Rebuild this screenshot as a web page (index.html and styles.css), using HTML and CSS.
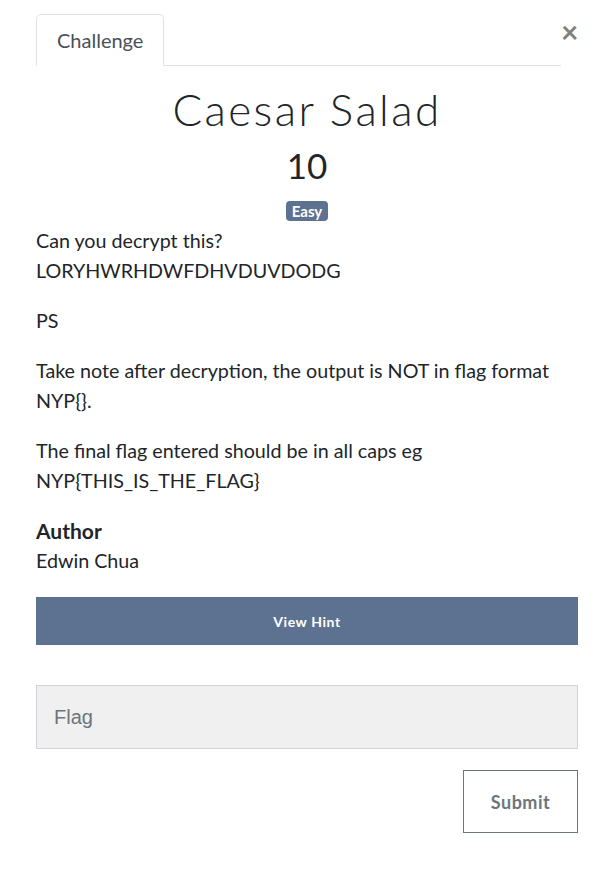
FILE: index.html
```html
<!DOCTYPE html>
<html>
<head>
<meta charset="utf-8">
<link rel="stylesheet" href="styles.css">
</head>
<body>
<div class="modal">
  <div class="header">
    <ul class="tabs">
      <li class="tab active">Challenge</li>
    </ul>
    <button class="close" aria-label="Close">&times;</button>
  </div>
  <h2 class="title">Caesar Salad</h2>
  <h3 class="value">10</h3>
  <div class="tags"><span class="badge">Easy</span></div>
  <div class="description">
    <p>Can you decrypt this?<br>LORYHWRHDWFDHVDUVDODG</p>
    <p>PS</p>
    <p>Take note after decryption, the output is NOT in flag format NYP{}.</p>
    <p>The final flag entered should be in all caps eg NYP{THIS_IS_THE_FLAG}</p>
    <h4 class="author-label">Author</h4>
    <p class="author">Edwin Chua</p>
  </div>
  <button class="hint">View Hint</button>
  <input class="flag" type="text" placeholder="Flag">
  <div class="submit-row">
    <button class="submit">Submit</button>
  </div>
</div>
</body>
</html>
```
FILE: styles.css
```css
* { box-sizing: border-box; }
body {
  margin: 0;
  background: #fff;
  font-family: Lato, "Liberation Sans", sans-serif;
  color: #212529;
  font-size: 19.7px;
  line-height: 30px;
}
.modal {
  padding: 14px 30px 40px 36px;
}
.header {
  display: flex;
  align-items: flex-start;
}
.tabs {
  flex: 1;
  list-style: none;
  margin: 0;
  padding: 0;
  display: flex;
  border-bottom: 1px solid #dee2e6;
  font-size: 20px;
}
.tab {
  padding: 10px 20px;
  border: 1px solid transparent;
  border-radius: 5px 5px 0 0;
  color: #495057;
  margin-bottom: -1px;
}
.tab.active {
  border-color: #dee2e6 #dee2e6 #fff;
  background: #fff;
}
.close {
  background: none;
  border: 0;
  padding: 0;
  margin: 2px 0 0 0;
  width: 17px;
  font-family: Lato, sans-serif;
  font-weight: 700;
  font-size: 30px;
  line-height: 30px;
  color: #808080;
  cursor: pointer;
}
.title {
  text-align: center;
  font-family: Lato, sans-serif;
  font-weight: 300;
  font-size: 44px;
  letter-spacing: 2.4px;
  line-height: 53px;
  margin: 17px 0 0 0;
  color: #212529;
}
.value {
  text-align: center;
  font-weight: 400;
  font-size: 35px;
  line-height: 42px;
  margin: 8px 0 0 0;
}
.tags {
  text-align: center;
  margin-top: 15px;
  line-height: 20px;
  height: 20px;
}
.badge {
  display: inline-block;
  vertical-align: top;
  background: #5c7290;
  color: #fff;
  font-weight: 700;
  font-size: 15px;
  line-height: 20px;
  height: 20px;
  padding: 0 6px;
  border-radius: 4px;
}
.description {
  margin-top: 5px;
}
.description p {
  margin: 0 0 20px;
}
.author-label {
  margin: 0;
  font-weight: 700;
  font-size: 21px;
  line-height: 30px;
}
.description p.author {
  margin: 0;
}
.hint {
  display: block;
  width: 100%;
  margin-top: 21px;
  height: 48px;
  background: #5c7290;
  border: 0;
  color: #fff;
  font-family: Lato, sans-serif;
  font-weight: 700;
  font-size: 14px;
  letter-spacing: 0.6px;
}
.flag {
  display: block;
  width: 100%;
  margin-top: 40px;
  height: 64px;
  background: #f0f0f0;
  border: 1px solid #ced4da;
  padding: 0 17px;
  font-family: "Liberation Sans", Arial, sans-serif;
  font-size: 20px;
  color: #495057;
}
.flag::placeholder { color: #6c757d; }
.submit-row {
  display: flex;
  justify-content: flex-end;
  margin-top: 21px;
}
.submit {
  width: 115px;
  height: 63px;
  background: #fff;
  border: 1px solid #6c757d;
  color: #6c757d;
  font-family: Lato, sans-serif;
  font-weight: 700;
  font-size: 18px;
  letter-spacing: 0.5px;
}
```
